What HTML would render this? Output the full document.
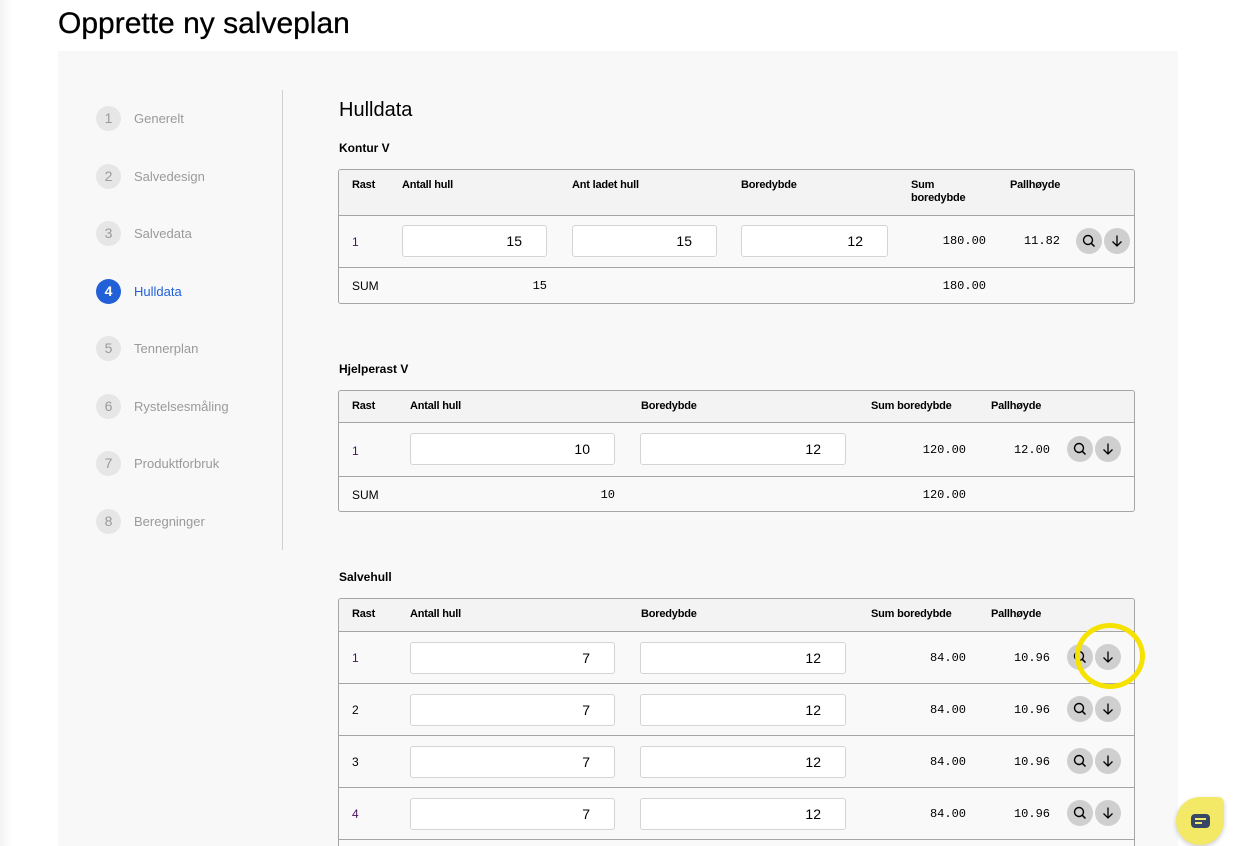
<!DOCTYPE html>
<html><head><meta charset="utf-8"><style>
*{box-sizing:border-box;margin:0;padding:0}
html{width:1236px;height:846px;overflow:hidden}
body{width:1236px;height:846px;overflow:hidden;background:#fff;font-family:"Liberation Sans",Arial,sans-serif;position:relative;color:#000}
.a{position:absolute}
h1{position:absolute;left:58px;top:7px;font-size:30px;font-weight:normal;letter-spacing:0px;-webkit-text-stroke:0.3px #000}
.panel{position:absolute;left:58px;top:51px;width:1120px;height:800px;background:#f8f8f8}
.shadow{position:absolute;left:0;top:0;width:12px;height:846px;background:linear-gradient(90deg,#f3f3f3,#fff)}
.step{position:absolute;left:96px;width:200px;height:26px;font-size:13px;color:#9a9a9a}
.step .c{position:absolute;left:0;top:0;width:25px;height:25px;border-radius:50%;background:#e6e6e6;color:#9a9a9a;text-align:center;line-height:25px;font-size:14px}
.step .t{position:absolute;left:38px;top:5px}
.step.on .c{background:#2260d8;color:#fff;font-weight:bold}
.step.on .t{color:#2260d8}
.vline{position:absolute;left:282px;top:90px;width:1px;height:460px;background:#d0d0d0}
.tbl{position:absolute;left:338px;width:797px;border:1px solid #a5a5a5;border-radius:3px;background:#f9f9f9;overflow:hidden}
.hd{position:absolute;left:0;top:0;width:100%;background:#f3f3f3;border-bottom:1px solid #a5a5a5}
.row{position:absolute;left:0;width:100%;border-bottom:1px solid #a5a5a5}
.h{position:absolute;font-size:11px;font-weight:bold;letter-spacing:-0.2px;line-height:13px}
.cell{position:absolute;font-size:12px}
.r{color:#4a1060}
.num{position:absolute;font-family:"Liberation Mono",monospace;font-size:12px;text-align:right}
.in{position:absolute;height:32px;background:#fff;border:1px solid #d4d4d4;border-radius:3px;font-size:14px;text-align:right;padding-right:24px;line-height:30px}
.b{position:absolute;width:26px;height:26px;border-radius:50%;background:#cfcfcf}
.b svg{position:absolute;left:5px;top:5px}
.sec{position:absolute;left:339px;font-size:12px;font-weight:bold}
</style></head><body>
<div class="shadow"></div>
<h1>Opprette ny salveplan</h1>
<div class="panel"></div>
<div class="vline"></div>

<div class="step" style="top:106px"><div class="c">1</div><div class="t">Generelt</div></div>
<div class="step" style="top:164px"><div class="c">2</div><div class="t">Salvedesign</div></div>
<div class="step" style="top:221px"><div class="c">3</div><div class="t">Salvedata</div></div>
<div class="step on" style="top:279px"><div class="c">4</div><div class="t">Hulldata</div></div>
<div class="step" style="top:336px"><div class="c">5</div><div class="t">Tennerplan</div></div>
<div class="step" style="top:394px"><div class="c">6</div><div class="t">Rystelsesmåling</div></div>
<div class="step" style="top:451px"><div class="c">7</div><div class="t">Produktforbruk</div></div>
<div class="step" style="top:509px"><div class="c">8</div><div class="t">Beregninger</div></div>

<div class="a" style="left:339px;top:99px;font-size:20px">Hulldata</div>
<div class="sec" style="top:141px">Kontur V</div>

<!-- Kontur V -->
<div class="tbl" style="top:169px;height:135px">
  <div class="hd" style="height:46px">
    <div class="h" style="left:13px;top:9px">Rast</div>
    <div class="h" style="left:63px;top:9px">Antall hull</div>
    <div class="h" style="left:233px;top:9px">Ant ladet hull</div>
    <div class="h" style="left:402px;top:9px">Boredybde</div>
    <div class="h" style="left:572px;top:9px">Sum<br>boredybde</div>
    <div class="h" style="left:671px;top:9px">Pallhøyde</div>
  </div>
  <div class="row" style="top:46px;height:52px">
    <div class="cell r" style="left:13px;top:19px">1</div>
    <div class="in" style="left:63px;top:9px;width:145px">15</div>
    <div class="in" style="left:233px;top:9px;width:145px">15</div>
    <div class="in" style="left:402px;top:9px;width:147px">12</div>
    <div class="num" style="left:560px;top:18px;width:87px">180.00</div>
    <div class="num" style="left:650px;top:18px;width:71px">11.82</div>
    <div class="b" style="left:737px;top:12px"><svg width="16" height="16" viewBox="0 0 16 16"><circle cx="7" cy="7" r="4.5" fill="none" stroke="#000" stroke-width="1.4"/><path d="M10.3 10.3L13.5 13.5" stroke="#000" stroke-width="1.5"/></svg></div>
    <div class="b" style="left:765px;top:12px"><svg width="16" height="16" viewBox="0 0 16 16"><path d="M8 2.5V13M3.5 8.5L8 13l4.5-4.5" fill="none" stroke="#000" stroke-width="1.3"/></svg></div>
  </div>
  <div class="cell" style="left:13px;top:109px">SUM</div>
  <div class="num" style="left:150px;top:109px;width:58px">15</div>
  <div class="num" style="left:560px;top:109px;width:87px">180.00</div>
</div>

<div class="sec" style="top:362px">Hjelperast V</div>
<div class="tbl" style="top:390px;height:122px">
  <div class="hd" style="height:32px">
    <div class="h" style="left:13px;top:9px">Rast</div>
    <div class="h" style="left:71px;top:9px">Antall hull</div>
    <div class="h" style="left:302px;top:9px">Boredybde</div>
    <div class="h" style="left:532px;top:9px">Sum boredybde</div>
    <div class="h" style="left:652px;top:9px">Pallhøyde</div>
  </div>
  <div class="row" style="top:32px;height:54px">
    <div class="cell r" style="left:13px;top:21px">1</div>
    <div class="in" style="left:71px;top:10px;width:205px">10</div>
    <div class="in" style="left:301px;top:10px;width:206px">12</div>
    <div class="num" style="left:540px;top:20px;width:87px">120.00</div>
    <div class="num" style="left:640px;top:20px;width:71px">12.00</div>
    <div class="b" style="left:728px;top:13px"><svg width="16" height="16" viewBox="0 0 16 16"><circle cx="7" cy="7" r="4.5" fill="none" stroke="#000" stroke-width="1.4"/><path d="M10.3 10.3L13.5 13.5" stroke="#000" stroke-width="1.5"/></svg></div>
    <div class="b" style="left:756px;top:13px"><svg width="16" height="16" viewBox="0 0 16 16"><path d="M8 2.5V13M3.5 8.5L8 13l4.5-4.5" fill="none" stroke="#000" stroke-width="1.3"/></svg></div>
  </div>
  <div class="cell" style="left:13px;top:97px">SUM</div>
  <div class="num" style="left:200px;top:97px;width:76px">10</div>
  <div class="num" style="left:540px;top:97px;width:87px">120.00</div>
</div>

<div class="sec" style="top:570px">Salvehull</div>
<div class="tbl" style="top:598px;height:260px">
  <div class="hd" style="height:33px">
    <div class="h" style="left:13px;top:9px">Rast</div>
    <div class="h" style="left:71px;top:9px">Antall hull</div>
    <div class="h" style="left:302px;top:9px">Boredybde</div>
    <div class="h" style="left:532px;top:9px">Sum boredybde</div>
    <div class="h" style="left:652px;top:9px">Pallhøyde</div>
  </div>
  <div class="row" style="top:33px;height:52px">
    <div class="cell r" style="left:13px;top:19px">1</div>
    <div class="in" style="left:71px;top:10px;width:205px">7</div>
    <div class="in" style="left:301px;top:10px;width:206px">12</div>
    <div class="num" style="left:540px;top:19px;width:87px">84.00</div>
    <div class="num" style="left:640px;top:19px;width:71px">10.96</div>
    <div class="b" style="left:728px;top:12px"><svg width="16" height="16" viewBox="0 0 16 16"><circle cx="7" cy="7" r="4.5" fill="none" stroke="#000" stroke-width="1.4"/><path d="M10.3 10.3L13.5 13.5" stroke="#000" stroke-width="1.5"/></svg></div>
    <div class="b" style="left:756px;top:12px"><svg width="16" height="16" viewBox="0 0 16 16"><path d="M8 2.5V13M3.5 8.5L8 13l4.5-4.5" fill="none" stroke="#000" stroke-width="1.3"/></svg></div>
  </div>
  <div class="row" style="top:85px;height:52px">
    <div class="cell" style="left:13px;top:19px">2</div>
    <div class="in" style="left:71px;top:10px;width:205px">7</div>
    <div class="in" style="left:301px;top:10px;width:206px">12</div>
    <div class="num" style="left:540px;top:19px;width:87px">84.00</div>
    <div class="num" style="left:640px;top:19px;width:71px">10.96</div>
    <div class="b" style="left:728px;top:12px"><svg width="16" height="16" viewBox="0 0 16 16"><circle cx="7" cy="7" r="4.5" fill="none" stroke="#000" stroke-width="1.4"/><path d="M10.3 10.3L13.5 13.5" stroke="#000" stroke-width="1.5"/></svg></div>
    <div class="b" style="left:756px;top:12px"><svg width="16" height="16" viewBox="0 0 16 16"><path d="M8 2.5V13M3.5 8.5L8 13l4.5-4.5" fill="none" stroke="#000" stroke-width="1.3"/></svg></div>
  </div>
  <div class="row" style="top:137px;height:52px">
    <div class="cell" style="left:13px;top:19px">3</div>
    <div class="in" style="left:71px;top:10px;width:205px">7</div>
    <div class="in" style="left:301px;top:10px;width:206px">12</div>
    <div class="num" style="left:540px;top:19px;width:87px">84.00</div>
    <div class="num" style="left:640px;top:19px;width:71px">10.96</div>
    <div class="b" style="left:728px;top:12px"><svg width="16" height="16" viewBox="0 0 16 16"><circle cx="7" cy="7" r="4.5" fill="none" stroke="#000" stroke-width="1.4"/><path d="M10.3 10.3L13.5 13.5" stroke="#000" stroke-width="1.5"/></svg></div>
    <div class="b" style="left:756px;top:12px"><svg width="16" height="16" viewBox="0 0 16 16"><path d="M8 2.5V13M3.5 8.5L8 13l4.5-4.5" fill="none" stroke="#000" stroke-width="1.3"/></svg></div>
  </div>
  <div class="row" style="top:189px;height:52px">
    <div class="cell r" style="left:13px;top:19px">4</div>
    <div class="in" style="left:71px;top:10px;width:205px">7</div>
    <div class="in" style="left:301px;top:10px;width:206px">12</div>
    <div class="num" style="left:540px;top:19px;width:87px">84.00</div>
    <div class="num" style="left:640px;top:19px;width:71px">10.96</div>
    <div class="b" style="left:728px;top:12px"><svg width="16" height="16" viewBox="0 0 16 16"><circle cx="7" cy="7" r="4.5" fill="none" stroke="#000" stroke-width="1.4"/><path d="M10.3 10.3L13.5 13.5" stroke="#000" stroke-width="1.5"/></svg></div>
    <div class="b" style="left:756px;top:12px"><svg width="16" height="16" viewBox="0 0 16 16"><path d="M8 2.5V13M3.5 8.5L8 13l4.5-4.5" fill="none" stroke="#000" stroke-width="1.3"/></svg></div>
  </div>
</div>

<!-- yellow highlight ring -->
<div class="a" style="left:1075px;top:623px;width:70px;height:66px;border:5px solid #f6e200;border-radius:50%"></div>

<!-- chat bubble -->
<div class="a" style="left:1176px;top:797px;width:48px;height:48px;background:#f3e967;border-radius:50%;border-top-right-radius:6px;box-shadow:0 2px 5px rgba(0,0,0,0.2)"></div>
<div class="a" style="left:1191px;top:814px;width:19px;height:14px;background:#384766;border-radius:4px"></div>
<div class="a" style="left:1195px;top:818px;width:11px;height:2px;background:#f3e967"></div>
<div class="a" style="left:1195px;top:822px;width:7px;height:2px;background:#f3e967"></div>
</body></html>
